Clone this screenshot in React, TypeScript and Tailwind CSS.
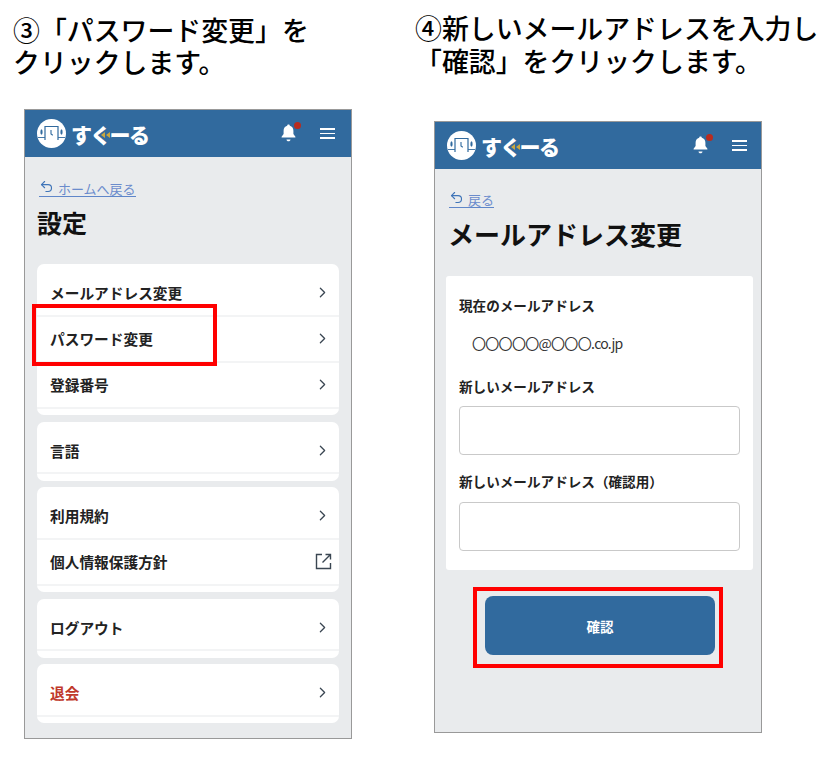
import { ChevronRight, Undo2 } from 'lucide-react';

const jp = "font-['Noto_Sans_CJK_JP','Noto_Sans',sans-serif]";

function Logo() {
    return (
        <div className="flex items-center">
            <svg width="29" height="29" viewBox="0 0 29 29" className="shrink-0">
                <circle cx="14.5" cy="14.5" r="14.5" fill="#ffffff" />
                <path d="M8 21V7.5h13V21" fill="none" stroke="#316a9e" strokeWidth="1.2" />
                <path d="M14 11v4l1.800 1.300" fill="none" stroke="#316a9e" strokeWidth="1.1" />
                <ellipse cx="4.5" cy="13" rx="1.1" ry="2.8" fill="#316a9e" />
                <ellipse cx="24.5" cy="13" rx="1.1" ry="2.8" fill="#316a9e" />
                <path d="M1 18.500h7M21 18.500h7" stroke="#316a9e" strokeWidth="0.9" />
            </svg>
            <div className="relative ml-[5px]">
                <span className={`block text-[21px] leading-[28px] font-black tracking-[-1.7px] text-white ${jp}`}>すくーる</span>
                <svg width="9" height="6" viewBox="0 0 9 6" className="absolute left-[30px] top-[12px]">
                    <path d="M0 3l4-3v6zM5 3l4-3v6z" fill="#c9a640" />
                </svg>
            </div>
        </div>
    );
}

function Header({ right }: { right: string }) {
    return (
        <div className={`flex h-[47px] shrink-0 items-center justify-between bg-[#316a9e] pl-[12px] ${right}`}>
            <Logo />
            <div className="flex items-center gap-[24px]">
                <div className="relative -translate-y-[1px]">
                    <svg width="15" height="18" viewBox="0 0 15 18" className="block">
                        <path d="M7.5 0.5c0.8 0 1.3 0.5 1.3 1.2 2.4 0.6 3.6 2.6 3.6 5v3.4l2 2.6v0.8H0.6v-0.8l2-2.6V6.700c0-2.400 1.200-4.400 3.600-5 0-0.700 0.500-1.200 1.300-1.200z" fill="#ffffff" />
                        <path d="M5.500 15.500h4c0 1-0.900 1.800-2 1.800s-2-0.800-2-1.800z" fill="#ffffff" />
                    </svg>
                    <span className="absolute -right-[5px] -top-[2px] h-[7px] w-[7px] rounded-full bg-[#b92c1f]" />
                </div>
                <div className="flex w-[15px] flex-col gap-[3px]">
                    <span className="h-[1.5px] bg-white" />
                    <span className="h-[1.5px] bg-white" />
                    <span className="h-[1.5px] bg-white" />
                </div>
            </div>
        </div>
    );
}

function BackLink({ label }: { label: string }) {
    return (
        <div className="flex h-[20px] items-center">
            <a className={`flex items-center border-b border-[#5f86c9] text-[13px] leading-[15px] text-[#6b8ccc] ${jp}`}>
                <Undo2 size={15} strokeWidth={1.8} className="mr-[4px] -translate-y-[2px] text-[#3f74b8]" />
                {label}
            </a>
        </div>
    );
}

function Row({ label, danger, external }: { label: string; danger?: boolean; external?: boolean }) {
    return (
        <div className="flex h-[46px] items-center justify-between border-b-2 border-[#f3f4f5] pl-[13px] pr-[7px]">
            <span className={`pt-[2px] text-[14.7px] font-bold ${danger ? 'text-[#c0392b]' : 'text-[#222]'} ${jp}`}>{label}</span>
            {external ? (
                <svg width="17" height="17" viewBox="0 0 17 17" fill="none" stroke="#3a4652" strokeWidth="1.4">
                    <path d="M7 1.500H1.500v14h14V10" />
                    <path d="M7.500 9.500L15.500 1.500M10.500 1.500h5v5" />
                </svg>
            ) : (
                <ChevronRight size={17} strokeWidth={1.8} className="mr-[1px] text-[#3a4652]" />
            )}
        </div>
    );
}

function MenuCard({ children }: { children: React.ReactNode }) {
    return <div className="rounded-[7px] bg-white py-[6.5px]">{children}</div>;
}

function Field({ label, gap }: { label: string; gap: string }) {
    return (
        <>
            <p className={`h-[20px] text-[13.6px] leading-[20px] font-bold text-[#222] ${jp}`}>{label}</p>
            <div className={`h-[49px] rounded-[4px] border border-[#c9c9c9] bg-white ${gap}`} />
        </>
    );
}

function SettingsPhone() {
    return (
        <div className="relative mt-[31px] flex h-[630px] w-[328px] flex-col border border-[#999] bg-[#e9ebed]">
            <Header right="pr-[16px]" />
            <div className="px-[12px] pt-[22px]">
                <div className="pl-[2px]">
                    <BackLink label="ホームへ戻る" />
                </div>
                <h2 className={`mt-[8px] h-[30px] text-[25px] leading-[30px] font-bold text-[#111] ${jp}`}>設定</h2>
                <div className="mt-[27px] flex flex-col gap-[6.5px]">
                    <MenuCard>
                        <Row label="メールアドレス変更" />
                        <Row label="パスワード変更" />
                        <Row label="登録番号" />
                    </MenuCard>
                    <MenuCard>
                        <Row label="言語" />
                    </MenuCard>
                    <MenuCard>
                        <Row label="利用規約" />
                        <Row label="個人情報保護方針" external />
                    </MenuCard>
                    <MenuCard>
                        <Row label="ログアウト" />
                    </MenuCard>
                    <MenuCard>
                        <Row label="退会" danger />
                    </MenuCard>
                </div>
            </div>
            {/* highlight round パスワード変更 */}
            <div className="absolute left-[7px] top-[194px] h-[62px] w-[185px] border-4 border-[#ff0000]" />
        </div>
    );
}

function EmailPhone() {
    return (
        <div className="mt-[44px] flex h-[612px] w-[328px] flex-col border border-[#999] bg-[#e9ebed]">
            <Header right="pr-[14px]" />
            <div className="pl-[11px] pr-[8px] pt-[21px]">
                <div className="pl-[3px]">
                    <BackLink label="戻る" />
                </div>
                <h2 className={`mt-[9px] h-[30px] pl-[2px] text-[26px] leading-[30px] font-bold text-[#111] ${jp}`}>メールアドレス変更</h2>
                <div className="mt-[27px] rounded-[3px] bg-white px-[13px] pb-[19px] pt-[19px]">
                    <p className={`h-[20px] text-[13.6px] leading-[20px] font-bold text-[#222] ${jp}`}>現在のメールアドレス</p>
                    <p className={`mt-[18px] h-[20px] pl-[13px] text-[14px] leading-[20px] tracking-[-0.7px] text-[#333] ${jp}`}>〇〇〇〇〇@〇〇〇.co.jp</p>
                    <div className="mt-[23px]">
                        <Field label="新しいメールアドレス" gap="mt-[10px]" />
                    </div>
                    <div className="mt-[16px]">
                        <Field label="新しいメールアドレス（確認用）" gap="mt-[11px]" />
                    </div>
                </div>
                {/* red box sits just outside the button */}
                <div className="ml-[27px] mt-[17px] w-[250px] border-4 border-[#ff0000] pb-[9px] pl-[8px] pr-[4px] pt-[5px]">
                    <button className={`flex h-[59px] w-full items-center justify-center rounded-[8px] bg-[#316a9e] pt-[2px] text-[13.5px] font-bold text-white ${jp}`}>確認</button>
                </div>
            </div>
        </div>
    );
}

export default function App() {
    return (
        <div className="flex h-[757px] w-[832px] overflow-hidden bg-white">
            <div className="ml-[24px] w-[328px]">
                <h1 className={`-ml-[11px] w-[340px] pt-[14px] text-[26.9px] leading-[32px] font-medium text-black ${jp}`}>
                    ③「パスワード変更」を
                    <br />
                    クリックします。
                </h1>
                <SettingsPhone />
            </div>
            <div className="ml-[82px] w-[328px]">
                <h1 className={`-ml-[19px] w-[410px] pt-[11px] text-[26.9px] leading-[33px] font-medium text-black ${jp}`}>
                    ④新しいメールアドレスを入力し
                    <br />
                    「確認」をクリックします。
                </h1>
                <EmailPhone />
            </div>
        </div>
    );
}
